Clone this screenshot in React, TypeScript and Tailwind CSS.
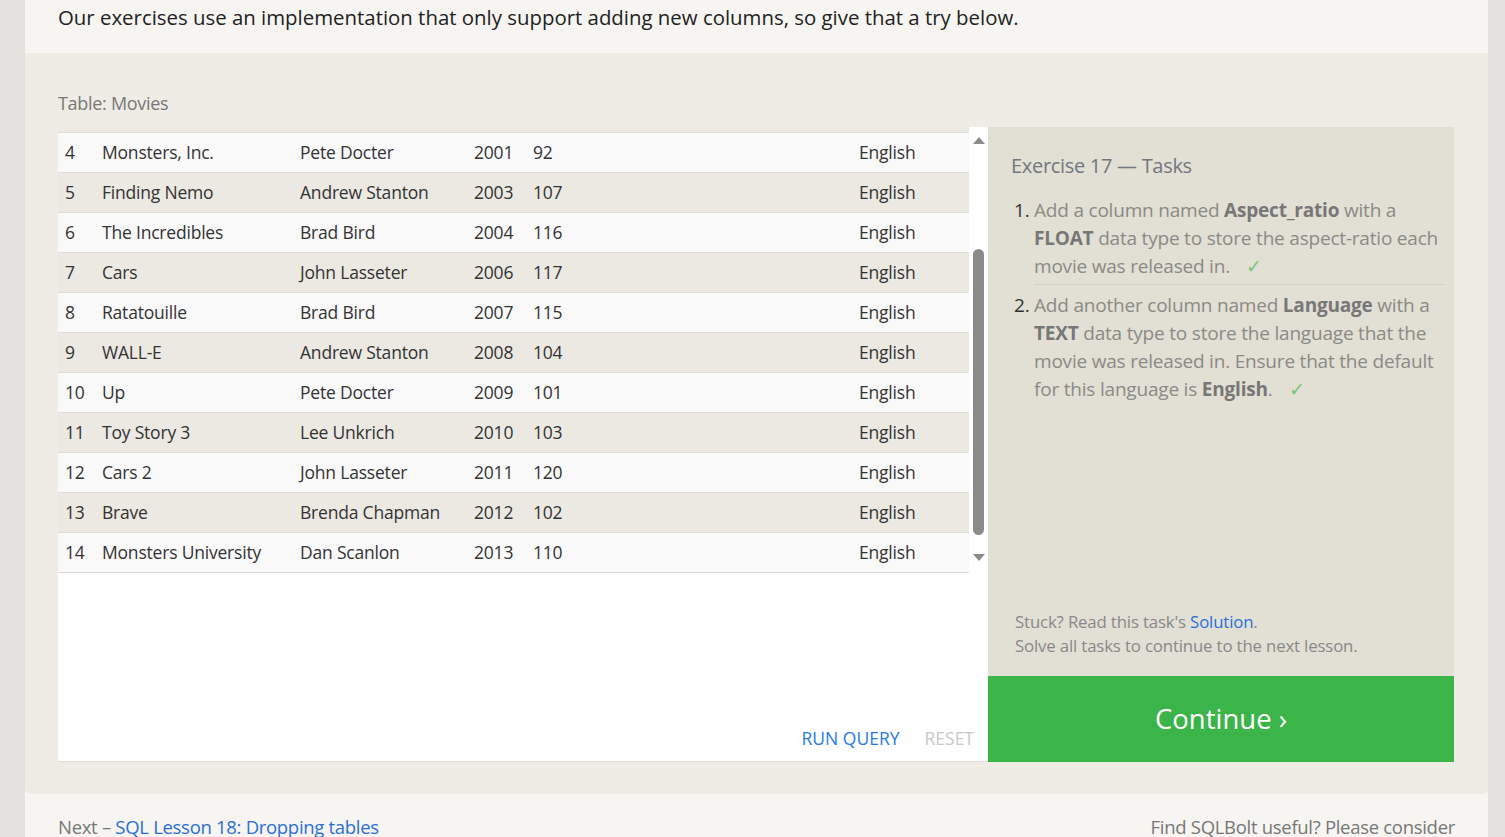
import React from 'react';

const movies = [
  [4, 'Monsters, Inc.', 'Pete Docter', 2001, 92],
  [5, 'Finding Nemo', 'Andrew Stanton', 2003, 107],
  [6, 'The Incredibles', 'Brad Bird', 2004, 116],
  [7, 'Cars', 'John Lasseter', 2006, 117],
  [8, 'Ratatouille', 'Brad Bird', 2007, 115],
  [9, 'WALL-E', 'Andrew Stanton', 2008, 104],
  [10, 'Up', 'Pete Docter', 2009, 101],
  [11, 'Toy Story 3', 'Lee Unkrich', 2010, 103],
  [12, 'Cars 2', 'John Lasseter', 2011, 120],
  [13, 'Brave', 'Brenda Chapman', 2012, 102],
  [14, 'Monsters University', 'Dan Scanlon', 2013, 110],
] as const;

const Check = () => <span className="ml-4 text-[#7cc47f]">✓</span>;

export default function App() {
  return (
    <div className="min-h-screen bg-[#e5e1de] font-['Open_Sans',sans-serif]">
      <div className="mx-[25px] w-[1463px] bg-[#f6f5f1]">
        {/* intro text */}
        <div className="h-[53px] px-[33px]">
          <p className="text-[20.4px] leading-[34px] text-[#222]">
            Our exercises use an implementation that only support adding new columns, so give that a try below.
          </p>
        </div>

        {/* exercise block */}
        <div className="rounded-b-md bg-[#efece5] px-[33px] pt-[36px] pb-[32px]">
          <div className="mb-[10px] text-[18px] leading-[28px] text-[#777] tracking-[-0.3px]">Table: Movies</div>

          <div className="flex">
            {/* query results panel */}
            <div className="flex h-[635px] w-[930px] flex-col border-b border-[#e2e0d8] bg-white">
              <div className="flex h-[444px]">
                <div className="flex-1">
                  <div className="h-[5px] border-b border-[#e0ded7] bg-[#ebe9e2] box-content" />
                  {movies.map((m, i) => (
                    <div
                      key={m[0]}
                      className={`flex h-[40px] items-center border-b border-[#dddbd5] text-[17.5px] text-[#333] tracking-[-0.2px] ${
                        i % 2 === 0 ? 'bg-[#f9f9f9]' : 'bg-[#ebe9e2]'
                      }`}
                    >
                      <span className="w-[44px] pl-[7px]">{m[0]}</span>
                      <span className="w-[198px]">{m[1]}</span>
                      <span className="w-[174px]">{m[2]}</span>
                      <span className="w-[59px]">{m[3]}</span>
                      <span className="flex-1">{m[4]}</span>
                      <span className="w-[110px]">English</span>
                    </div>
                  ))}
                </div>
                {/* scrollbar */}
                <div className="flex w-[19px] flex-col items-center bg-white pt-[10px] pb-[10px]">
                  <div className="h-0 w-0 border-x-[6px] border-b-[7px] border-x-transparent border-b-[#8a8a8a]" />
                  <div className="mt-[105px] h-[286px] w-[11px] rounded-full bg-[#8a8a8a]" />
                  <div className="mt-auto h-0 w-0 border-x-[6px] border-t-[7px] border-x-transparent border-t-[#8a8a8a]" />
                </div>
              </div>
              <div className="mt-auto flex justify-end gap-[25px] pr-[14px] pb-[10px] text-[17.5px]">
                <span className="text-[#2a7ae2]">RUN QUERY</span>
                <span className="text-[#c8c8c8]">RESET</span>
              </div>
            </div>

            {/* tasks panel */}
            <div className="flex w-[466px] flex-col">
              <div className="flex h-[549px] flex-col bg-[#e2dfd4] pl-[23px] pr-[10px] pt-[24px] pb-[18px]">
                <h3 className="text-[20px] leading-[30px] text-[#727780] tracking-[-0.3px]">Exercise 17 — Tasks</h3>
                <ol className="mt-[15px] pl-[23px] text-[19px] leading-[28px] text-[#8a8a86] tracking-[-0.2px]">
                  <li className="relative border-b border-[#d3d0c6] pb-[4px]">
                    <span className="absolute left-[-20px] text-[#333]">1.</span>
                    Add a column named <b className="text-[#777]">Aspect_ratio</b> with a{' '}
                    <b className="text-[#777]">FLOAT</b> data type to store the aspect-ratio each movie was released in.
                    <Check />
                  </li>
                  <li className="relative pt-[6px]">
                    <span className="absolute left-[-20px] text-[#333]">2.</span>
                    Add another column named <b className="text-[#777]">Language</b> with a{' '}
                    <b className="text-[#777]">TEXT</b> data type to store the language that the movie was released in.
                    Ensure that the default for this language is <b className="text-[#777]">English</b>.
                    <Check />
                  </li>
                </ol>
                <div className="mt-auto pl-[4px] text-[16.8px] leading-[24px] text-[#888] tracking-[-0.15px]">
                  <div>
                    Stuck? Read this task's <span className="text-[#2a6fd6]">Solution</span>.
                  </div>
                  <div>Solve all tasks to continue to the next lesson.</div>
                </div>
              </div>
              <div className="flex h-[86px] items-center justify-center bg-[#3bb44a] text-[27.5px] text-white">
                Continue ›
              </div>
            </div>
          </div>
        </div>

        {/* footer */}
        <div className="flex h-[45px] items-end justify-between px-[33px] text-[18.5px] leading-[24px] text-[#777] tracking-[-0.3px]">
          <div>
            Next – <span className="text-[#2a6fd6]">SQL Lesson 18: Dropping tables</span>
          </div>
          <div>Find SQLBolt useful? Please consider</div>
        </div>
      </div>
    </div>
  );
}
